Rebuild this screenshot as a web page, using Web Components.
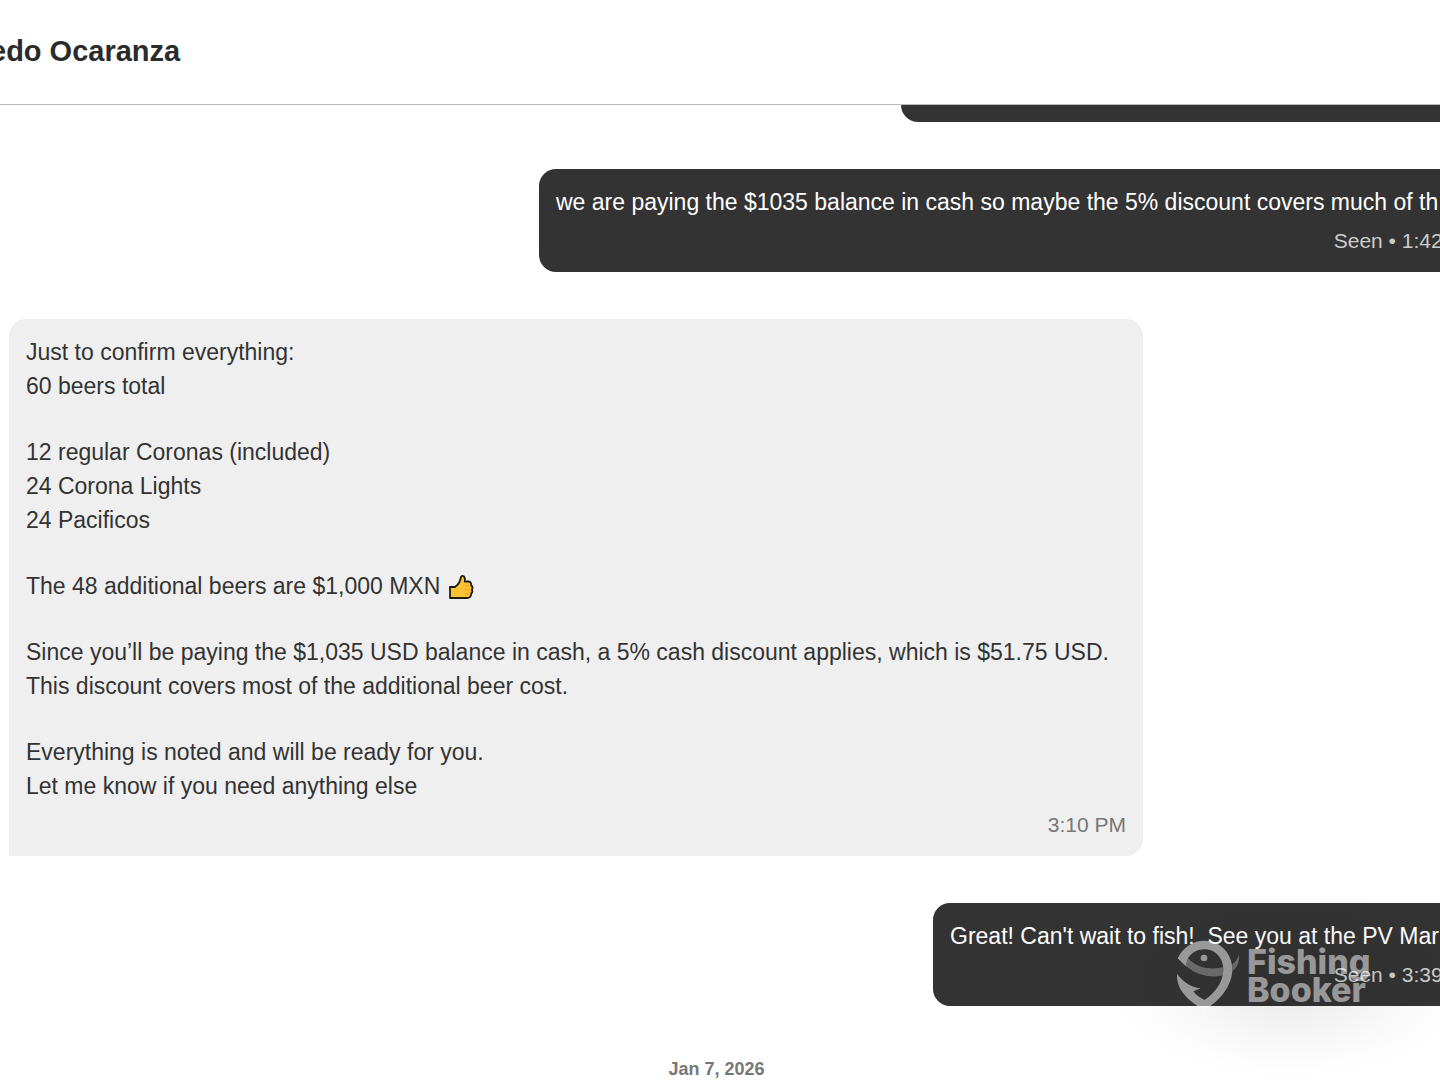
<!DOCTYPE html>
<html lang="en">
<head>
<meta charset="utf-8">
<title>Messages</title>
<style>
html, body { margin: 0; height: 100%; overflow: hidden; background: #fff; }
body { font-family: "Liberation Sans", Arial, sans-serif; color: #333; }
</style>
</head>
<body>
<chat-page>
  <chat-header slot="header">edo Ocaranza</chat-header>
  <chat-bubble class="sent previous"></chat-bubble>
  <chat-bubble class="sent balance"><p>we are paying the $1035 balance in cash so maybe the 5% discount covers much of th</p><span slot="meta">Seen • 1:42 PM</span></chat-bubble>
  <chat-bubble class="received">
    <p>Just to confirm everything:<br>60 beers total</p>
    <p>12 regular Coronas (included)<br>24 Corona Lights<br>24 Pacificos</p>
    <p>The 48 additional beers are $1,000 MXN <thumb-icon></thumb-icon></p>
    <p>Since you’ll be paying the $1,035 USD balance in cash, a 5% cash discount applies, which is $51.75 USD.<br>This discount covers most of the additional beer cost.</p>
    <p>Everything is noted and will be ready for you.<br>Let me know if you need anything else</p>
    <time slot="meta">3:10 PM</time>
  </chat-bubble>
  <chat-bubble class="sent farewell"><p>Great! Can't wait to fish!&nbsp; See you at the PV Marina</p><span slot="meta">Seen • 3:39 PM</span></chat-bubble>
  <chat-date>Jan 7, 2026</chat-date>
  <brand-mark slot="brand"></brand-mark>
</chat-page>
<script>
const define = (name, html) => customElements.define(name, class extends HTMLElement {
  constructor() {
    super();
    this.attachShadow({ mode: 'open' }).innerHTML = html;
  }
});

define('chat-page', `
<style>
:host { display: flex; flex-direction: column; height: 100vh; overflow: hidden; position: relative; }
main { flex: 1; min-height: 0; overflow: hidden; }
.feed { display: flex; flex-direction: column; gap: 47px; margin: 0 -57px 0 -64px; }
::slotted(chat-bubble.sent) { align-self: flex-end; --bg: #333; --fg: #fff; --meta: #ccc; --radius: 17px; }
::slotted(chat-bubble.previous) { width: 596px; height: 17px; --radius: 0 0 17px 17px; }
::slotted(chat-bubble.balance) { width: 958px; }
::slotted(chat-bubble.farewell) { width: 564px; }
::slotted(chat-bubble.received) { align-self: flex-start; min-width: 1134px; margin-left: 73px; --bg: #efefef; --fg: #333; --meta: #777; --radius: 17px 17px 17px 0; }
</style>
<slot name="header"></slot>
<main><div class="feed"><slot></slot></div></main>
<slot name="brand"></slot>`);

define('chat-header', `
<style>
:host { display: block; flex: none; border-bottom: 1px solid #bbb; }
h1 { margin: 0 0 0 -10px; padding: 34px 0 36px; font-size: 29px; line-height: 34px; font-weight: 700; color: #2b2b2b; white-space: nowrap; }
</style>
<h1><slot></slot></h1>`);

define('chat-bubble', `
<style>
:host { display: flex; flex-direction: column; gap: 7px; box-sizing: border-box; padding: 16px 17px; flex: none;
  background: var(--bg); color: var(--fg); border-radius: var(--radius); font-size: 23px; line-height: 34px; white-space: nowrap; }
:host(.previous) { padding: 0; }
:host(.previous) .meta { display: none; }
.body { display: flex; flex-direction: column; gap: 32px; }
::slotted(p) { margin: 0; }
.meta { align-self: flex-end; font-size: 21px; line-height: 30px; color: var(--meta); }
</style>
<div class="body"><slot></slot></div>
<div class="meta"><slot name="meta"></slot></div>`);

define('chat-date', `
<style>
:host { display: block; text-align: center; font-size: 18px; line-height: 32px; font-weight: 700; color: #777; }
</style>
<slot></slot>`);

define('thumb-icon', `
<style>
:host { display: inline-block; vertical-align: -6px; height: 26px; line-height: 0; }
</style>
<svg width="28" height="26" viewBox="0 0 28 26" role="img" aria-label="thumbs up">
<path d="M3 13H8Q11 11 12.500 8L14 3Q15 1 17 2.500Q18.500 4 17.800 7.500H21.500Q24.500 8 24 11Q26.500 13 25 15.500Q26 18 24.300 19.500Q24 24 20 24H3Z" fill="#fdc131" stroke="#1c1b14" stroke-width="1.800" stroke-linejoin="round"/>
<path d="M18 12H23.500M18 16H24M18 20H23" stroke="#e9952e" stroke-width=".8"/>
</svg>`);

define('brand-mark', `
<style>
:host { position: absolute; right: 0; bottom: 0; width: 340px; height: 220px; pointer-events: none; overflow: hidden; }
.haze { position: absolute; inset: 0; background: radial-gradient(ellipse 185px 95px at 190px 125px, rgba(0,0,0,.08), rgba(0,0,0,.06) 30%, rgba(0,0,0,.022) 65%, rgba(0,0,0,.006) 85%, transparent); }
.logo { position: absolute; left: 70px; top: 70px; display: flex; color: #fff; opacity: .5; }
.name { padding-top: 18px; margin-left: -3px; font: 800 34px/28px Inter, sans-serif; }
.name span { display: block; }
</style>
<div class="haze"></div>
<div class="logo">
<svg width="80" height="90" viewBox="0 0 240 270" fill="#fff" aria-hidden="true">
<path d="M23 85C40 50 70 32 104 32C150 32 187 70 187 118C187 170 145 217 103 240C60 217 18 182 21 132C40 156 62 172 92 175L70 184C76 194 90 203 103 210C130 194 160 160 160 118C160 84 135 58 104 58C82 58 66 67 54 85L47 108Q34 97 23 85Z"/>
<path opacity=".55" d="M54 85C72 104 94 114 120 115Q142 116 160 112L160 136Q98 150 47 108ZM187 103Q202 92 207 73Q211 105 187 124Z"/>
<circle cx="102" cy="84" r="10"/>
</svg>
<div class="name"><span>Fishing</span><span>Booker</span></div>
</div>`);
</script>
</body>
</html>
